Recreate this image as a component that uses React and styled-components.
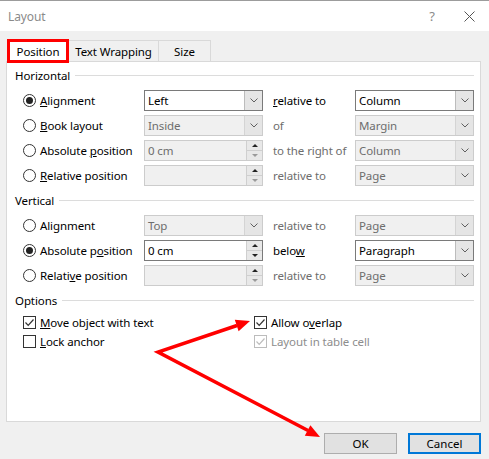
import React from 'react'
import styled, {createGlobalStyle} from 'styled-components'

const GlobalStyle = createGlobalStyle`
  body {
    margin: 0;
    background: #f0f0f0;
    font-family: "Noto Sans", "Segoe UI", sans-serif;
    font-size: 11.5px;
    letter-spacing: -0.1px;
  }
`

const Dialog = styled.div`
  position: relative;
  width: 489px;
  height: 459px;
  box-sizing: border-box;
  border-top: 1px solid #9c9c9c;
  background: #f0f0f0;
  overflow: hidden;
`
const TitleBar = styled.div`
  height: 30px;
  display: flex;
  align-items: center;
  padding: 0 14px 0 8px;
  background: #fff;
  color: #8a8a8a;
  font-size: 12px;
`
const TitleText = styled.div`
  flex: 1;
`
const Help = styled.div`
  width: 20px;
  margin-right: 22px;
  text-align: center;
  font-size: 13px;
  color: #8a8a8a;
`
const Body = styled.div`
  padding: 8px 8px 0 6px;
`
const Tabs = styled.div`
  display: flex;
  align-items: flex-end;
  height: 24px;
  margin-left: 1px;
  margin-bottom: -2px;
  position: relative;
  z-index: 1;
`
const Tab = styled.div`
  box-sizing: border-box;
  height: ${p => (p.$active ? '24px' : '21px')};
  margin-bottom: ${p => (p.$active ? '0' : '2px')};
  display: flex;
  align-items: center;
  justify-content: center;
  white-space: nowrap;
  background: ${p => (p.$active ? '#fff' : '#f0f0f0')};
  border: ${p => (p.$active ? '3px solid #ff0000' : '1px solid #d9d9d9')};
  border-bottom: ${p => (p.$active ? '3px solid #ff0000' : 'none')};
  border-left: ${p => (p.$active ? '3px solid #ff0000' : 'none')};
  width: ${p => p.$w}px;
  color: #000;
`
const Panel = styled.div`
  box-sizing: border-box;
  height: 361px;
  padding: 1px 6px 0 8px;
  background: #fff;
  border: 1px solid #d9d9d9;
`
const SectionHeader = styled.div`
  height: 25px;
  display: flex;
  align-items: center;
  gap: 5px;
  color: #000;
  &::after {
    content: '';
    flex: 1;
    height: 1px;
    background: #dcdcdc;
  }
`
const Row = styled.div`
  height: 25px;
  padding-left: 8px;
  display: grid;
  grid-template-columns: 121px 119px 92px 119px;
  align-items: center;
`
const OptionRow = styled.div`
  height: 19px;
  padding-left: 8px;
  display: grid;
  grid-template-columns: 231px 1fr;
  align-items: center;
`
const Choice = styled.label`
  display: flex;
  align-items: center;
  gap: 4px;
  color: ${p => (p.$disabled ? '#8d8d8d' : '#000')};
  white-space: nowrap;
`
const Key = styled.span`
  text-decoration: underline;
`
const RadioCircle = styled.span`
  box-sizing: border-box;
  width: 13px;
  height: 13px;
  border: 1px solid #333;
  border-radius: 50%;
  background: #fff;
  display: flex;
  align-items: center;
  justify-content: center;
  &::after {
    content: '';
    width: 7px;
    height: 7px;
    border-radius: 50%;
    background: ${p => (p.$checked ? '#222' : 'transparent')};
  }
`
const Box = styled.span`
  box-sizing: border-box;
  width: 13px;
  height: 13px;
  border: 1px solid ${p => (p.$disabled ? '#bcbcbc' : '#333')};
  background: #fff;
  display: flex;
  align-items: center;
  justify-content: center;
`
const SideLabel = styled.div`
  padding-left: 10px;
  color: ${p => (p.$disabled ? '#6d6d6d' : '#000')};
  white-space: nowrap;
`
const Field = styled.div`
  box-sizing: border-box;
  height: 21px;
  display: flex;
  border: 1px solid ${p => (p.$disabled ? '#cccccc' : '#7a7a7a')};
  background: ${p => (p.$disabled ? '#f0f0f0' : '#fff')};
`
const FieldText = styled.div`
  flex: 1;
  padding-left: 3px;
  display: flex;
  align-items: center;
  color: ${p => (p.$disabled ? '#6d6d6d' : '#000')};
`
const ArrowBox = styled.div`
  width: 17px;
  display: flex;
  align-items: center;
  justify-content: center;
  background: #e5e5e5;
  border-left: 1px solid ${p => (p.$disabled ? '#d4d4d4' : '#bcbcbc')};
`
const SpinBox = styled.div`
  width: 15px;
  display: flex;
  flex-direction: column;
  border-left: 1px solid #cfcfcf;
  background: #e8e8e8;
`
const SpinHalf = styled.div`
  flex: 1;
  display: flex;
  align-items: center;
  justify-content: center;
  & + & {
    border-top: 1px solid #cfcfcf;
  }
`
const Footer = styled.div`
  display: flex;
  justify-content: flex-end;
  gap: 11px;
  padding-top: 11px;
`
const Button = styled.button`
  box-sizing: border-box;
  width: 73px;
  height: 21px;
  padding: 0;
  font: inherit;
  color: #000;
  background: #e1e1e1;
  border: ${p => (p.$focused ? '2px solid #0078d7' : '1px solid #adadad')};
`
const Annotation = styled.svg`
  position: absolute;
  left: 0;
  top: -1px;
  pointer-events: none;
`

const Chevron = () => (
  <svg width="8" height="5" viewBox="0 0 8 5">
    <path d="M0.5 0.5 L4 4 L7.5 0.5" fill="none" stroke="#606060" strokeWidth="1" />
  </svg>
)

const Tick = ({color}) => (
  <svg width="11" height="11" viewBox="0 0 11 11">
    <path d="M1.5 5.5 L4.2 8.3 L9.5 2.5" fill="none" stroke={color} strokeWidth="1.2" />
  </svg>
)

const Select = ({value, disabled}) => (
  <Field $disabled={disabled}>
    <FieldText $disabled={disabled}>{value}</FieldText>
    <ArrowBox $disabled={disabled}><Chevron /></ArrowBox>
  </Field>
)

const Spinner = ({value, disabled}) => (
  <Field $disabled={disabled}>
    <FieldText $disabled={disabled}>{value}</FieldText>
    <SpinBox>
      <SpinHalf>
        <svg width="6" height="3" viewBox="0 0 6 3"><path d="M0 3 L3 0 L6 3 Z" fill="#222" /></svg>
      </SpinHalf>
      <SpinHalf>
        <svg width="6" height="3" viewBox="0 0 6 3"><path d="M0 0 L3 3 L6 0 Z" fill={disabled ? '#9a9a9a' : '#222'} /></svg>
      </SpinHalf>
    </SpinBox>
  </Field>
)

const Radio = ({checked, children}) => (
  <Choice>
    <RadioCircle $checked={checked} />
    <span>{children}</span>
  </Choice>
)

const Check = ({checked, disabled, children}) => (
  <Choice $disabled={disabled}>
    <Box $disabled={disabled}>{checked && <Tick color={disabled ? '#bcbcbc' : '#333'} />}</Box>
    <span>{children}</span>
  </Choice>
)

export default function App() {
  return (
    <>
      <GlobalStyle />
      <Dialog>
        <TitleBar>
          <TitleText>Layout</TitleText>
          <Help>?</Help>
          <svg width="11" height="11" viewBox="0 0 11 11">
            <path d="M0.5 0.5 L10.5 10.5 M10.5 0.5 L0.5 10.5" stroke="#555" strokeWidth="1" />
          </svg>
        </TitleBar>
        <Body>
          <Tabs>
            <Tab $active $w={62}>Position</Tab>
            <Tab $w={90}>Text Wrapping</Tab>
            <Tab $w={52}>Size</Tab>
          </Tabs>
          <Panel>
            <SectionHeader>Horizontal</SectionHeader>
            <Row>
              <Radio checked><Key>A</Key>lignment</Radio>
              <Select value="Left" />
              <SideLabel><Key>r</Key>elative to</SideLabel>
              <Select value="Column" />
            </Row>
            <Row>
              <Radio><Key>B</Key>ook layout</Radio>
              <Select value="Inside" disabled />
              <SideLabel $disabled>of</SideLabel>
              <Select value="Margin" disabled />
            </Row>
            <Row>
              <Radio>Absolute <Key>p</Key>osition</Radio>
              <Spinner value="0 cm" disabled />
              <SideLabel $disabled>to the right of</SideLabel>
              <Select value="Column" disabled />
            </Row>
            <Row>
              <Radio><Key>R</Key>elative position</Radio>
              <Spinner value="" disabled />
              <SideLabel $disabled>relative to</SideLabel>
              <Select value="Page" disabled />
            </Row>

            <SectionHeader>Vertical</SectionHeader>
            <Row>
              <Radio>Ali<Key>g</Key>nment</Radio>
              <Select value="Top" disabled />
              <SideLabel $disabled>relative to</SideLabel>
              <Select value="Page" disabled />
            </Row>
            <Row>
              <Radio checked>Absolute p<Key>o</Key>sition</Radio>
              <Spinner value="0 cm" />
              <SideLabel>belo<Key>w</Key></SideLabel>
              <Select value="Paragraph" />
            </Row>
            <Row>
              <Radio>Relati<Key>v</Key>e position</Radio>
              <Spinner value="" disabled />
              <SideLabel $disabled>relative to</SideLabel>
              <Select value="Page" disabled />
            </Row>

            <SectionHeader>Options</SectionHeader>
            <OptionRow>
              <Check checked><Key>M</Key>ove object with text</Check>
              <Check checked>Allow o<Key>v</Key>erlap</Check>
            </OptionRow>
            <OptionRow>
              <Check><Key>L</Key>ock anchor</Check>
              <Check checked disabled>Layout in table cell</Check>
            </OptionRow>
          </Panel>
          <Footer>
            <Button>OK</Button>
            <Button $focused>Cancel</Button>
          </Footer>
        </Body>
        <Annotation width="489" height="459" viewBox="0 0 489 459">
          <path d="M237 325.5 L158 352 L308 430.5" fill="none" stroke="#ff0000" strokeWidth="3.5" strokeLinejoin="miter" />
          <polygon points="250,321 238.6,331.2 234.8,319.8" fill="#ff0000" />
          <polygon points="320,437 304.8,435.8 310.4,425.2" fill="#ff0000" />
        </Annotation>
      </Dialog>
    </>
  )
}
